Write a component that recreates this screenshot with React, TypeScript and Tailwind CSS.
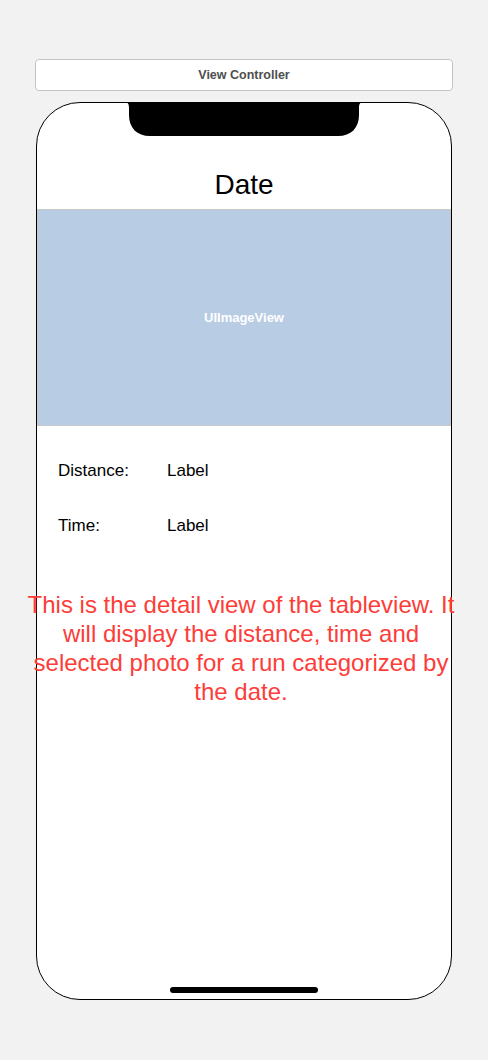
import React from 'react'

const Notch: React.FC = () => (
  <svg width="240" height="35" viewBox="0 0 240 35" className="absolute -top-px left-[87px]">
    <path
      d="M0 0 H240 C236 0 235 2 235 6 V13 C235 26 227 34 214 34 H26 C13 34 5 26 5 13 V6 C5 2 4 0 0 0 Z"
      fill="#000"
    />
  </svg>
)

const InfoRow: React.FC<{ name: string; value: string; className?: string }> = ({ name, value, className }) => (
  <div className={`flex text-[17px] leading-[20px] text-black ${className ?? ''}`}>
    <span className="w-[109px]">{name}</span>
    <span>{value}</span>
  </div>
)

const App: React.FC = () => {
  return (
    <div
      className="w-[488px] h-[1060px] bg-[#f2f2f2] pt-[59px] pl-[35px]"
      style={{ fontFamily: '"Liberation Sans", Arial, sans-serif' }}
    >
      <div className="w-[418px] h-[32px] pt-px bg-white border border-[#c4c4c4] rounded-[4px] flex items-center justify-center text-[12.5px] font-bold text-[#4f4f4f]">
        View Controller
      </div>

      <div className="relative mt-[11px] ml-px w-[416px] h-[898px] bg-white border border-black rounded-[44px] flex flex-col">
        <Notch />

        <header className="h-[106px] flex items-end justify-center pb-[7px]">
          <h1 className="text-[28px] leading-[34px] text-black">Date</h1>
        </header>

        <div className="h-[217px] bg-[#b8cce4] border border-[#c8c8c8] flex items-center justify-center">
          <span className="text-[13px] font-bold text-white">UIImageView</span>
        </div>

        <div className="pl-[21px]">
          <InfoRow name="Distance:" value="Label" className="mt-[35px]" />
          <InfoRow name="Time:" value="Label" className="mt-[35px]" />
        </div>

        <p className="mt-[54px] -ml-[13px] w-[434px] text-center text-[24px] leading-[29px] text-[#fc3d39]">
          This is the detail view of the tableview. It will display the distance, time and selected photo for a run categorized by the date.
        </p>

        <div className="mt-auto mb-[6px] self-center w-[148px] h-[6px] rounded-full bg-black" />
      </div>
    </div>
  )
}

export default App
